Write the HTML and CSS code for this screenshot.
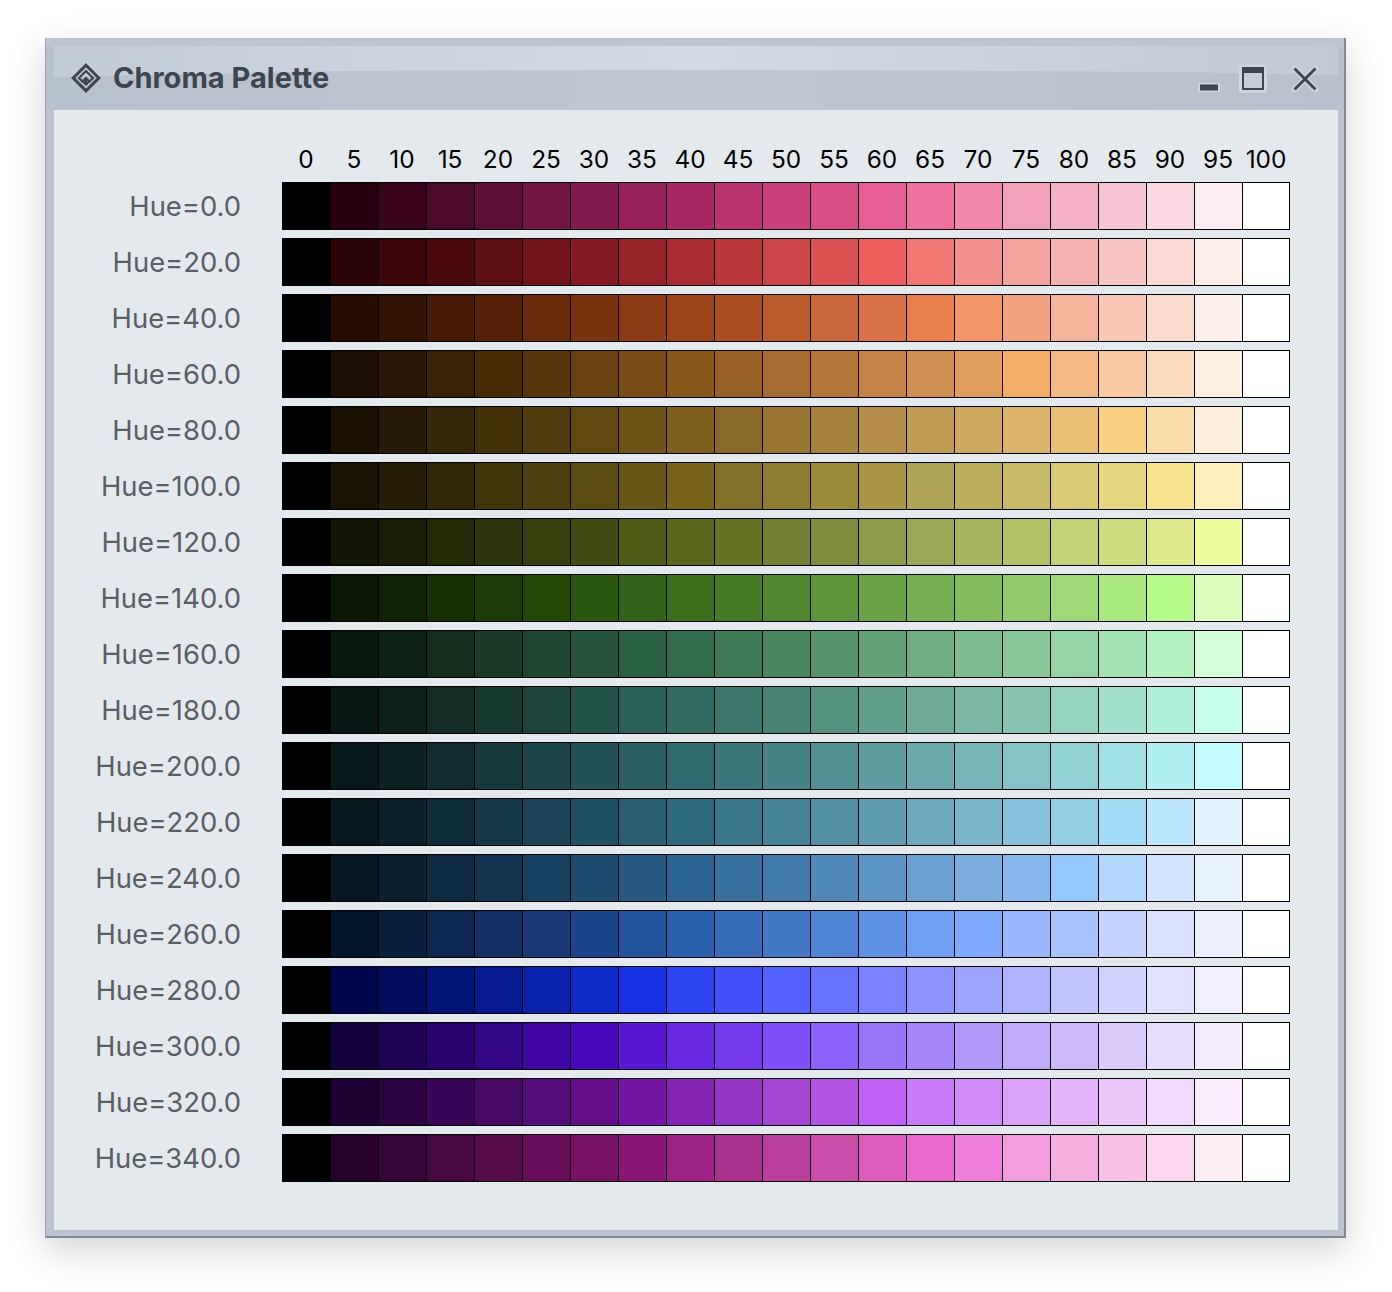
FILE: index.html
```html
<!DOCTYPE html>
<html lang="en">
<head>
<meta charset="utf-8">
<title>Chroma Palette</title>
<link rel="stylesheet" href="styles.css">
</head>
<body>
<div class="window">
<header class="titlebar">
<svg class="logo" viewBox="0 0 30 30" width="30" height="30"><path d="M15 2.2 27.8 15 15 27.8 2.2 15Z" fill="none" stroke="#3d4650" stroke-width="3"/><path d="M8 15 15 8 22 15 18.5 18.5 15 15 11.5 18.5Z" fill="none" stroke="#3d4650" stroke-width="2.2"/><path d="M15 15V21M11.5 18 15 21.5 18.5 18" fill="none" stroke="#3d4650" stroke-width="2.2"/></svg>
<h1 class="title">Chroma Palette</h1>
<div class="controls">
<svg class="ctl" viewBox="0 0 22 28" width="22" height="28"><rect x="0" y="18" width="22" height="9" rx="1" fill="#cfd6e0"/><rect x="2" y="19.5" width="18" height="6" fill="#3d4650"/></svg>
<svg class="ctl" viewBox="0 0 28 28" width="28" height="28"><rect x="0" y="0" width="28" height="28" rx="2" fill="#cfd6e0"/><rect x="3" y="2" width="22" height="23" fill="#3d4650"/><rect x="5" y="8" width="18" height="15" fill="#c5cdd8"/></svg>
<svg class="ctl" viewBox="0 0 28 28" width="28" height="28"><path d="M3.5 3.5 24.5 24.5M24.5 3.5 3.5 24.5" stroke="#cfd6e0" stroke-width="6" stroke-linecap="round"/><path d="M3.5 3.5 24.5 24.5M24.5 3.5 3.5 24.5" stroke="#3d4650" stroke-width="3"/></svg>
</div>
</header>
<main class="content">
<div class="row head"><span class="label"></span><span class="n">0</span><span class="n">5</span><span class="n">10</span><span class="n">15</span><span class="n">20</span><span class="n">25</span><span class="n">30</span><span class="n">35</span><span class="n">40</span><span class="n">45</span><span class="n">50</span><span class="n">55</span><span class="n">60</span><span class="n">65</span><span class="n">70</span><span class="n">75</span><span class="n">80</span><span class="n">85</span><span class="n">90</span><span class="n">95</span><span class="n">100</span></div>
<div class="row"><span class="label">Hue=0.0</span><i style="background:#000000"></i><i style="background:#2a0010"></i><i style="background:#3b041d"></i><i style="background:#4c0a2b"></i><i style="background:#5e0f37"></i><i style="background:#701544"></i><i style="background:#831a4f"></i><i style="background:#951f59"></i><i style="background:#a82664"></i><i style="background:#b93470"></i><i style="background:#c8417c"></i><i style="background:#d84f88"></i><i style="background:#e75d96"></i><i style="background:#ef6f9e"></i><i style="background:#f188ac"></i><i style="background:#f3a0ba"></i><i style="background:#f4b1c6"></i><i style="background:#f7c4d5"></i><i style="background:#f9d8e2"></i><i style="background:#fdecf1"></i><i style="background:#ffffff"></i></div>
<div class="row"><span class="label">Hue=20.0</span><i style="background:#000000"></i><i style="background:#2a0406"></i><i style="background:#3a0607"></i><i style="background:#4b0a0c"></i><i style="background:#5e0f11"></i><i style="background:#721418"></i><i style="background:#851a22"></i><i style="background:#962229"></i><i style="background:#a92c31"></i><i style="background:#bb3839"></i><i style="background:#ca4647"></i><i style="background:#da5152"></i><i style="background:#ec5f5d"></i><i style="background:#f07672"></i><i style="background:#f28f8a"></i><i style="background:#f4a29e"></i><i style="background:#f5b2ae"></i><i style="background:#f7c6c2"></i><i style="background:#fad9d5"></i><i style="background:#fdeee9"></i><i style="background:#ffffff"></i></div>
<div class="row"><span class="label">Hue=40.0</span><i style="background:#000000"></i><i style="background:#280c02"></i><i style="background:#351303"></i><i style="background:#471a05"></i><i style="background:#572108"></i><i style="background:#692b0c"></i><i style="background:#7b330f"></i><i style="background:#8a3a14"></i><i style="background:#9b4419"></i><i style="background:#ab4f22"></i><i style="background:#bb5b2b"></i><i style="background:#c9663a"></i><i style="background:#d97248"></i><i style="background:#e97f4d"></i><i style="background:#f29567"></i><i style="background:#f3a382"></i><i style="background:#f4b59c"></i><i style="background:#f7c7b3"></i><i style="background:#fadacb"></i><i style="background:#fdefe9"></i><i style="background:#ffffff"></i></div>
<div class="row"><span class="label">Hue=60.0</span><i style="background:#000000"></i><i style="background:#1e1004"></i><i style="background:#2b1804"></i><i style="background:#3a2206"></i><i style="background:#4a2b08"></i><i style="background:#59350c"></i><i style="background:#69400f"></i><i style="background:#784a16"></i><i style="background:#875719"></i><i style="background:#966025"></i><i style="background:#a66b31"></i><i style="background:#b5763a"></i><i style="background:#c48247"></i><i style="background:#d08f52"></i><i style="background:#e19d5d"></i><i style="background:#f3ad66"></i><i style="background:#f4b984"></i><i style="background:#f6c9a0"></i><i style="background:#fadcbd"></i><i style="background:#fdf0e0"></i><i style="background:#ffffff"></i></div>
<div class="row"><span class="label">Hue=80.0</span><i style="background:#000000"></i><i style="background:#1c1204"></i><i style="background:#281b05"></i><i style="background:#362608"></i><i style="background:#443008"></i><i style="background:#523b0e"></i><i style="background:#614710"></i><i style="background:#6f5216"></i><i style="background:#7f5e1c"></i><i style="background:#8a682a"></i><i style="background:#97742f"></i><i style="background:#a6813c"></i><i style="background:#b48e4a"></i><i style="background:#c09b54"></i><i style="background:#cda85f"></i><i style="background:#dcb46b"></i><i style="background:#e9bf75"></i><i style="background:#f6cf80"></i><i style="background:#fadca8"></i><i style="background:#fdefd9"></i><i style="background:#ffffff"></i></div>
<div class="row"><span class="label">Hue=100.0</span><i style="background:#000000"></i><i style="background:#191404"></i><i style="background:#251e05"></i><i style="background:#322807"></i><i style="background:#403409"></i><i style="background:#4d3f0e"></i><i style="background:#5b4a11"></i><i style="background:#695616"></i><i style="background:#766219"></i><i style="background:#827029"></i><i style="background:#8f7c33"></i><i style="background:#9c8a3b"></i><i style="background:#a99647"></i><i style="background:#b0a256"></i><i style="background:#bdae5e"></i><i style="background:#cabb6b"></i><i style="background:#dac975"></i><i style="background:#e7d680"></i><i style="background:#f5e48d"></i><i style="background:#fdf0bd"></i><i style="background:#ffffff"></i></div>
<div class="row"><span class="label">Hue=120.0</span><i style="background:#000000"></i><i style="background:#111604"></i><i style="background:#1a1e07"></i><i style="background:#212907"></i><i style="background:#2c3409"></i><i style="background:#38400f"></i><i style="background:#424c12"></i><i style="background:#4d5a16"></i><i style="background:#5b661d"></i><i style="background:#667224"></i><i style="background:#738033"></i><i style="background:#7f8c3e"></i><i style="background:#8c9c49"></i><i style="background:#9aa856"></i><i style="background:#a7b65e"></i><i style="background:#b4c267"></i><i style="background:#c3d177"></i><i style="background:#cddb7f"></i><i style="background:#dfe88d"></i><i style="background:#edfb9b"></i><i style="background:#ffffff"></i></div>
<div class="row"><span class="label">Hue=140.0</span><i style="background:#000000"></i><i style="background:#0a1803"></i><i style="background:#0e2303"></i><i style="background:#142f04"></i><i style="background:#1a3c06"></i><i style="background:#224808"></i><i style="background:#2a560e"></i><i style="background:#326218"></i><i style="background:#3a6e1a"></i><i style="background:#437a26"></i><i style="background:#4f8730"></i><i style="background:#5d953b"></i><i style="background:#69a347"></i><i style="background:#76b054"></i><i style="background:#82bd5d"></i><i style="background:#90cc6c"></i><i style="background:#9dd976"></i><i style="background:#aae880"></i><i style="background:#b7fb8c"></i><i style="background:#dcfebd"></i><i style="background:#ffffff"></i></div>
<div class="row"><span class="label">Hue=160.0</span><i style="background:#000000"></i><i style="background:#08180c"></i><i style="background:#0c2214"></i><i style="background:#132d1c"></i><i style="background:#183a27"></i><i style="background:#1d4730"></i><i style="background:#25533b"></i><i style="background:#2a6042"></i><i style="background:#316c4c"></i><i style="background:#3d7a55"></i><i style="background:#48875f"></i><i style="background:#55946a"></i><i style="background:#62a276"></i><i style="background:#6eae80"></i><i style="background:#7cbc8d"></i><i style="background:#88c997"></i><i style="background:#94d6a3"></i><i style="background:#a1e4b0"></i><i style="background:#b0f3be"></i><i style="background:#d3ffd8"></i><i style="background:#ffffff"></i></div>
<div class="row"><span class="label">Hue=180.0</span><i style="background:#000000"></i><i style="background:#071714"></i><i style="background:#0b2119"></i><i style="background:#102c25"></i><i style="background:#163a30"></i><i style="background:#1c463c"></i><i style="background:#235248"></i><i style="background:#295f54"></i><i style="background:#2f6b60"></i><i style="background:#3b786b"></i><i style="background:#478476"></i><i style="background:#549280"></i><i style="background:#609f8c"></i><i style="background:#6daa98"></i><i style="background:#7ab8a5"></i><i style="background:#87c5b2"></i><i style="background:#94d3be"></i><i style="background:#a0e0cc"></i><i style="background:#aef0da"></i><i style="background:#c6ffea"></i><i style="background:#ffffff"></i></div>
<div class="row"><span class="label">Hue=200.0</span><i style="background:#000000"></i><i style="background:#07191a"></i><i style="background:#0b2123"></i><i style="background:#102c30"></i><i style="background:#153a3e"></i><i style="background:#1c454b"></i><i style="background:#225257"></i><i style="background:#285e64"></i><i style="background:#2e6a70"></i><i style="background:#3b777c"></i><i style="background:#468389"></i><i style="background:#528f95"></i><i style="background:#5f9ca2"></i><i style="background:#6ba9af"></i><i style="background:#78b6bb"></i><i style="background:#85c3c8"></i><i style="background:#92d1d5"></i><i style="background:#a1e0e6"></i><i style="background:#b0eff4"></i><i style="background:#c4fdff"></i><i style="background:#ffffff"></i></div>
<div class="row"><span class="label">Hue=220.0</span><i style="background:#000000"></i><i style="background:#07181e"></i><i style="background:#0a202a"></i><i style="background:#0e2c38"></i><i style="background:#143a4a"></i><i style="background:#1b4556"></i><i style="background:#205163"></i><i style="background:#275e72"></i><i style="background:#2d6a80"></i><i style="background:#3a768c"></i><i style="background:#458298"></i><i style="background:#528fa6"></i><i style="background:#5f9cb2"></i><i style="background:#6ea8bf"></i><i style="background:#7ab5cc"></i><i style="background:#88c1db"></i><i style="background:#94cee6"></i><i style="background:#a1daf4"></i><i style="background:#bce7fc"></i><i style="background:#e1f3ff"></i><i style="background:#ffffff"></i></div>
<div class="row"><span class="label">Hue=240.0</span><i style="background:#000000"></i><i style="background:#071724"></i><i style="background:#0a1f30"></i><i style="background:#0d2a40"></i><i style="background:#123450"></i><i style="background:#184060"></i><i style="background:#1e4b6e"></i><i style="background:#24587f"></i><i style="background:#2b6492"></i><i style="background:#38709e"></i><i style="background:#4279ab"></i><i style="background:#4f87b9"></i><i style="background:#5c94c6"></i><i style="background:#6ca0d2"></i><i style="background:#7badde"></i><i style="background:#88b9ee"></i><i style="background:#94c8ff"></i><i style="background:#b2d7fd"></i><i style="background:#d0e4fe"></i><i style="background:#e8f2ff"></i><i style="background:#ffffff"></i></div>
<div class="row"><span class="label">Hue=260.0</span><i style="background:#000000"></i><i style="background:#03162c"></i><i style="background:#081f3e"></i><i style="background:#0b2750"></i><i style="background:#123064"></i><i style="background:#183b77"></i><i style="background:#1b458a"></i><i style="background:#20539b"></i><i style="background:#2860ad"></i><i style="background:#376cba"></i><i style="background:#4378c6"></i><i style="background:#5085d6"></i><i style="background:#5f92e4"></i><i style="background:#6e9ff2"></i><i style="background:#7fabff"></i><i style="background:#9ab8ff"></i><i style="background:#a9c3fe"></i><i style="background:#c3d2ff"></i><i style="background:#d9e1fe"></i><i style="background:#edf1ff"></i><i style="background:#ffffff"></i></div>
<div class="row"><span class="label">Hue=280.0</span><i style="background:#000000"></i><i style="background:#00064c"></i><i style="background:#000d5e"></i><i style="background:#001478"></i><i style="background:#061a90"></i><i style="background:#0b22ac"></i><i style="background:#0e2bca"></i><i style="background:#1732e6"></i><i style="background:#2b43f1"></i><i style="background:#4050fb"></i><i style="background:#5362fd"></i><i style="background:#6773ff"></i><i style="background:#7983fe"></i><i style="background:#8d94ff"></i><i style="background:#9ca4ff"></i><i style="background:#afb3fd"></i><i style="background:#c0c3fe"></i><i style="background:#d0d2ff"></i><i style="background:#e0e1fe"></i><i style="background:#f0f0fe"></i><i style="background:#ffffff"></i></div>
<div class="row"><span class="label">Hue=300.0</span><i style="background:#000000"></i><i style="background:#14023c"></i><i style="background:#1f0254"></i><i style="background:#2a0270"></i><i style="background:#330486"></i><i style="background:#3e05a1"></i><i style="background:#4a07bb"></i><i style="background:#5917d3"></i><i style="background:#6728e0"></i><i style="background:#753aeb"></i><i style="background:#824ef8"></i><i style="background:#8d61f9"></i><i style="background:#9973f8"></i><i style="background:#a684f9"></i><i style="background:#b298f9"></i><i style="background:#c0abfa"></i><i style="background:#ceb9fb"></i><i style="background:#dbcbfd"></i><i style="background:#e8dcfd"></i><i style="background:#f4ecfe"></i><i style="background:#ffffff"></i></div>
<div class="row"><span class="label">Hue=320.0</span><i style="background:#000000"></i><i style="background:#1e0233"></i><i style="background:#2c0341"></i><i style="background:#3b0557"></i><i style="background:#470963"></i><i style="background:#560d7c"></i><i style="background:#650f8c"></i><i style="background:#7416a3"></i><i style="background:#8524b3"></i><i style="background:#9335c5"></i><i style="background:#a346d4"></i><i style="background:#b254e4"></i><i style="background:#bf61f6"></i><i style="background:#c97af8"></i><i style="background:#d08cf8"></i><i style="background:#dca1f8"></i><i style="background:#e4b2f9"></i><i style="background:#ebc6fa"></i><i style="background:#f2d8fc"></i><i style="background:#f9edfe"></i><i style="background:#ffffff"></i></div>
<div class="row"><span class="label">Hue=340.0</span><i style="background:#000000"></i><i style="background:#25022a"></i><i style="background:#360437"></i><i style="background:#470840"></i><i style="background:#560b4a"></i><i style="background:#680d5a"></i><i style="background:#781265"></i><i style="background:#8a1778"></i><i style="background:#9c2385"></i><i style="background:#ab318f"></i><i style="background:#bb3f9d"></i><i style="background:#cb4daa"></i><i style="background:#dc5bbb"></i><i style="background:#ea67ce"></i><i style="background:#f07fdb"></i><i style="background:#f39dde"></i><i style="background:#f5aee0"></i><i style="background:#f7c0e5"></i><i style="background:#fad7ee"></i><i style="background:#fdeef5"></i><i style="background:#ffffff"></i></div>
</main>
</div>
</body>
</html>
```
FILE: styles.css
```css
* { box-sizing: border-box; }
html, body { margin: 0; background: #fff; }
body {
  padding: 38px 46px 54px 45px;
  font-family: Inter, "Liberation Sans", sans-serif;
}
.window {
  width: 1301px;
  background: #bac3cf;
  border-left: 1px solid #9aa4b2;
  border-right: 2px solid #7f8a98;
  border-bottom: 2px solid #7f8a98;
  padding: 0 6px 6px 8px;
  box-shadow: 0 12px 34px rgba(0, 0, 0, .18);
}
.titlebar {
  position: relative;
  height: 72px;
  margin: 0 -6px 0 -8px;
  padding: 0 25px 0 25px;
  display: flex;
  align-items: center;
  gap: 12px;
  background: linear-gradient(90deg, #b7c0cd 0, #bfc7d2 50%, #b7c0cc 100%);
}
.titlebar::before {
  content: "";
  position: absolute;
  left: 8px;
  right: 6px;
  top: 8px;
  height: 32px;
  background: linear-gradient(90deg, #c2ccd8 0, #d3dbe6 50%, #c0c9d5 100%);
  clip-path: polygon(0 0, 100% 0, 100% 29px, 88% 26px, 60% 24px, 42% 24px, 22% 25px, 0 31px);
}
.titlebar::after {
  content: "";
  position: absolute;
  left: 0;
  right: 0;
  top: 0;
  height: 8px;
  background: #bdc5d1;
}
.logo, .title, .controls { position: relative; z-index: 1; }
.logo { flex: none; margin-top: 8px; }
.title {
  margin: 8px 0 0;
  font-size: 29px;
  font-weight: 700;
  line-height: 34px;
  color: #3d4650;
}
.controls {
  margin-left: auto;
  margin-top: 10px;
  display: flex;
  gap: 24px;
}
.ctl { display: block; }
.ctl:first-child { margin-right: -5px; }
.content {
  height: 1120px;
  background: #e4e9ed;
  padding-top: 36px;
  display: flex;
  flex-direction: column;
  gap: 8px;
}
.row { display: flex; height: 48px; }
.head { height: 28px; }
.label {
  width: 228px;
  padding-right: 41px;
  text-align: right;
  font-size: 27.4px;
  line-height: 48px;
  color: #585f65;
}
.n {
  width: 48px;
  text-align: center;
  font-size: 24.4px;
  line-height: 26px;
  color: #000;
}
.row i {
  display: block;
  width: 48px;
  border: 1px solid #000;
  border-right: 0;
}
.row i:last-child { border-right: 1px solid #000; }
```
